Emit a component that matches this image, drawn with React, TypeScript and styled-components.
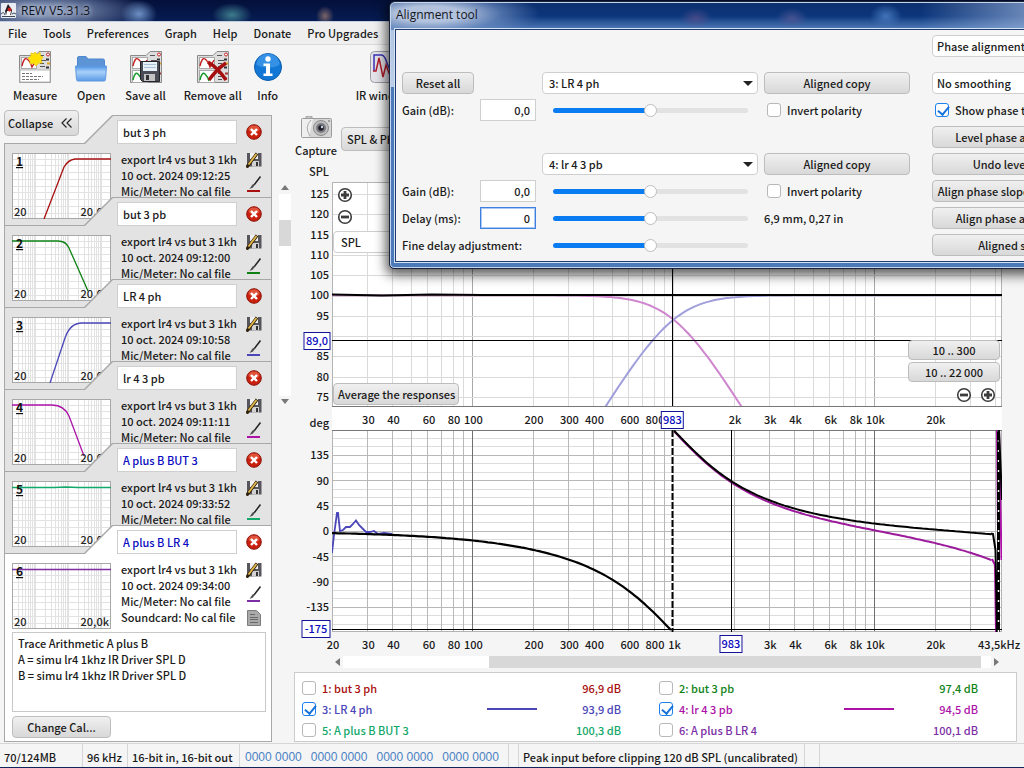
import React from "react";
import styled, { createGlobalStyle } from "styled-components";

const UI_FONT = '"Noto Sans CJK SC", "Open Sans", sans-serif';
const TITLE_FONT = '"Open Sans", "Noto Sans", sans-serif';

const GlobalStyle = createGlobalStyle`
  * { box-sizing: border-box; }
  body { margin: 0; background: #f5f5f5; }
  body, button, input, select, textarea {
    font-family: ${UI_FONT};
    font-size: 11px;
    line-height: 16px;
    font-weight: 500;
    color: #1a1a1a;
  }
`;

/* ---------- data ---------- */

type Measurement = {
  n: number;
  name: string;
  time: string;
  color: string;
  level: string;
  shown: boolean;
  computed?: boolean;
  thumb: string;
};

const measurements: Measurement[] = [
  { n: 1, name: "but 3 ph", time: "10 oct. 2024 09:12:25", color: "#a80f0f", level: "96,9 dB", shown: false, thumb: "M32 66L52 14Q56 7 63 6L99 6" },
  { n: 2, name: "but 3 pb", time: "10 oct. 2024 09:12:00", color: "#0f8216", level: "97,4 dB", shown: false, thumb: "M0 6L46 6Q54 6 57 13L76 56" },
  { n: 3, name: "LR 4 ph", time: "10 oct. 2024 09:10:58", color: "#4a46b8", level: "93,9 dB", shown: true, thumb: "M38 66L53 21Q58 6 70 6L99 6" },
  { n: 4, name: "lr 4 3 pb", time: "10 oct. 2024 09:11:11", color: "#ad12a8", level: "94,5 dB", shown: true, thumb: "M0 6L40 6Q52 6 57 17L72 57" },
  { n: 5, name: "A plus B BUT 3", time: "10 oct. 2024 09:33:52", color: "#12a86a", level: "100,3 dB", shown: false, computed: true, thumb: "M0 6.500L42 6.500L54 6L66 6.500L99 6.500" },
  { n: 6, name: "A plus B LR 4", time: "10 oct. 2024 09:34:00", color: "#7c2fa5", level: "100,1 dB", shown: false, computed: true, thumb: "M0 6.500L99 6.500" },
];

/* ---------- chart maths ---------- */

const W = 670;
const F_MIN = 20;
const DECADE = 201;
const fx = (f: number) => DECADE * Math.log10(f / F_MIN);
const pct = (f: number) => `${((fx(f) + 1) / W) * 100}%`;
const spl = (db: number) => 114 - (db - 100) * 4.06;
const deg = (d: number) => 101.3 - d * 0.5633;

const gridFreqs: number[] = [];
[10, 100, 1000, 10000].forEach((d) => {
  for (let k = 1; k < 10; k++) {
    const f = d * k;
    if (f > 20 && f < 43500) gridFreqs.push(f);
  }
});

const trace = (fn: (f: number) => number, from: number, to: number) => {
  const out: string[] = [];
  for (let x = fx(from); x <= fx(to); x += 3) {
    const f = F_MIN * Math.pow(10, x / DECADE);
    out.push(`${x.toFixed(1)} ${fn(f).toFixed(1)}`);
  }
  return "M" + out.join("L");
};

const highPass = (f: number) => {
  const r = Math.pow(f / 1000, 4);
  return spl(100.2 + 20 * Math.log10(r / (1 + r)));
};
const lowPass = (f: number) => {
  const r = Math.pow(f / 1000, 4);
  return spl(100.2 - 20 * Math.log10(1 + r));
};
const phase = (f: number, slope: number) => {
  const r = f / 1000;
  let p = (-2 * Math.atan2(Math.SQRT2 * r, 1 - r * r) * 180) / Math.PI;
  if (f > 995) p += 360;
  return deg(p - slope * r);
};

/* ---------- shared controls ---------- */

const Button = styled.button<{ $h?: number }>`
  height: ${(p) => p.$h ?? 22}px;
  padding: 0 4px;
  border: 1px solid #bdbdbd;
  border-radius: 4px;
  background: linear-gradient(#f0f0f0, #d8d8d8);
  white-space: nowrap;
  overflow: hidden;
  line-height: 18px;
`;

const TextBox = styled.input<{ $focus?: boolean; $blue?: boolean; $right?: boolean }>`
  display: block;
  width: 100%;
  height: ${(p) => (p.$right ? 22 : 24)}px;
  border: 1px solid ${(p) => (p.$focus ? "#3f7fe0" : "#cfcfcf")};
  box-shadow: ${(p) => (p.$focus ? "inset 0 0 0 1px #a9c8f4" : "none")};
  padding: 0 5px;
  background: #fff;
  color: ${(p) => (p.$blue ? "#0a0ac0" : "#1a1a1a")};
  text-align: ${(p) => (p.$right ? "right" : "left")};
  outline: none;
`;

const CheckLabel = styled.label<{ $color?: string }>`
  display: flex;
  align-items: center;
  gap: 6px;
  white-space: nowrap;
  color: ${(p) => p.$color ?? "#1a1a1a"};
`;

const CheckBox = styled.input.attrs({ type: "checkbox" })`
  appearance: none;
  flex: none;
  position: relative;
  width: 14px;
  height: 14px;
  margin: 0;
  border: 1px solid #b8b8b8;
  border-radius: 3px;
  background: #fff;
  &:checked {
    border-color: #1e80ea;
  }
  &:checked::after {
    content: "";
    position: absolute;
    left: 4px;
    top: 0;
    width: 5px;
    height: 9px;
    border: solid #1672dc;
    border-width: 0 2px 2px 0;
    transform: rotate(40deg);
  }
`;

const SelectWrap = styled.div<{ $arrow?: boolean }>`
  position: relative;
  height: 22px;
  &::after {
    content: "";
    display: ${(p) => (p.$arrow ? "block" : "none")};
    position: absolute;
    right: 5px;
    top: 9px;
    border: 5px solid transparent;
    border-top-color: #222;
    border-bottom: 0;
    pointer-events: none;
  }
`;

const SelectBox = styled.select<{ $inset?: number }>`
  appearance: none;
  display: block;
  width: 100%;
  height: 22px;
  padding: 0 ${(p) => p.$inset ?? 6}px;
  border: 1px solid #cfcfcf;
  border-radius: 4px;
  background: #fff;
  line-height: 18px;
`;

const Slider = styled.input.attrs({ type: "range" })`
  appearance: none;
  width: 195px;
  height: 14px;
  margin: 0 11px;
  background: transparent;
  &::-webkit-slider-runnable-track {
    height: 5px;
    border-radius: 3px;
    background: linear-gradient(90deg, #0a7cf2 50%, #e2e2e2 50%);
  }
  &::-webkit-slider-thumb {
    appearance: none;
    width: 13px;
    height: 13px;
    margin-top: -4px;
    border-radius: 50%;
    border: 1px solid #bdbdbd;
    background: #fff;
  }
`;

/* ---------- window frame ---------- */

const Window = styled.div`
  position: relative;
  display: flex;
  flex-direction: column;
  min-height: 100vh;
  overflow: hidden;
  background: #f5f5f5;
`;

const TitleBar = styled.header`
  display: flex;
  align-items: center;
  gap: 5px;
  height: 22px;
  padding: 0 1px;
  font-family: ${TITLE_FONT};
  font-size: 12px;
  font-weight: 400;
  color: #10131c;
  border-bottom: 1px solid #c3cfe0;
  background:
    radial-gradient(ellipse 18px 14px at 139px 14px, #6c8fc4, transparent),
    radial-gradient(ellipse 20px 12px at 232px 15px, #3d7c8c, transparent),
    radial-gradient(ellipse 9px 10px at 325px 16px, #7a6468, transparent),
    radial-gradient(ellipse 110px 24px at 40px 11px, #8493b3 20%, #44557f 60%, transparent),
    linear-gradient(#04103a, #061c52);
  & h1 {
    margin: 0;
    font: inherit;
    text-shadow: 0 0 4px #b9c4da, 0 0 6px #b9c4da;
  }
`;

const MenuBar = styled.nav`
  display: flex;
  gap: 16px;
  height: 23px;
  padding: 0 8px;
  align-items: center;
  background: #efefef;
  border-bottom: 1px solid #dadada;
`;

const MenuItem = styled.button`
  padding: 0;
  border: 0;
  background: none;
  white-space: nowrap;
`;

const Toolbar = styled.div`
  display: flex;
  gap: 18px;
  height: 63px;
  padding: 6px 13px 0;
`;

const ToolButton = styled.button<{ $push?: boolean }>`
  display: flex;
  flex: none;
  flex-direction: column;
  align-items: center;
  gap: 4px;
  padding: 0;
  border: 0;
  background: none;
  white-space: nowrap;
  margin-left: ${(p) => (p.$push ? 62 : 0)}px;
`;

const InfoButton = styled(ToolButton)`
  margin: 0 -6px;
`;

const Body = styled.div`
  display: flex;
  flex: 1;
`;

/* ---------- measurement list ---------- */

const Sidebar = styled.aside`
  display: flex;
  flex: none;
  width: 292px;
  padding: 2px 0 1px 4px;
`;

const ListColumn = styled.div`
  display: flex;
  flex-direction: column;
  width: 268px;
`;

const CollapseButton = styled(Button)`
  position: relative;
  z-index: 1;
  align-self: flex-start;
  display: flex;
  align-items: center;
  gap: 8px;
  width: 75px;
  padding: 0 3px;
`;

const CardList = styled.div`
  display: flex;
  flex-direction: column;
  flex: 1;
  margin-top: -21px;
`;

const TAB = "polygon(0 28px, 80px 28px, 108px 0, 100% 0, 100% 100%, 0 100%)";

const Card = styled.section<{ $active?: boolean }>`
  position: relative;
  isolation: isolate;
  display: grid;
  grid-template-columns: 99px 120px 22px;
  grid-template-rows: 24px auto;
  column-gap: 6px;
  row-gap: 8px;
  align-content: start;
  flex: ${(p) => (p.$active ? "1" : "none")};
  height: ${(p) => (p.$active ? "auto" : "111px")};
  padding: 5px 4px 3px 8px;
  overflow: hidden;
  & + & {
    margin-top: -29px;
  }
  &::before,
  &::after {
    content: "";
    position: absolute;
    z-index: -2;
    inset: 0;
    clip-path: ${TAB};
    background: #a8a8a8;
  }
  &::after {
    z-index: -1;
    inset: 1px;
    background: ${(p) => (p.$active ? "#ffffff" : "#e3e3e3")};
  }
`;

const NameCell = styled.div`
  grid-column: 2;
`;

const IconCell = styled.div<{ $top?: number }>`
  display: flex;
  flex-direction: column;
  align-items: center;
  justify-content: ${(p) => (p.$top ? "flex-start" : "center")};
  gap: 8px;
`;

const IconButton = styled.button`
  display: block;
  height: 16px;
  padding: 0;
  border: 0;
  background: none;
  & svg { display: block; }
`;

const Details = styled.div`
  margin-top: -1px;
  padding-left: 4px;
  overflow: hidden;
  white-space: nowrap;
`;

const ThumbSvg = styled.svg`
  display: block;
  margin-top: 1px;
`;

const Notes = styled.textarea`
  grid-column: 1 / -1;
  height: 80px;
  margin: -5px -1px 0 0;
  padding: 2px 5px;
  border: 1px solid #c8c8c8;
  background: #fff;
  resize: none;
  outline: none;
  display: block;
`;

const CalButton = styled(Button)`
  width: 99px;
  margin-top: -4px;
`;

const SideScroll = styled.div`
  display: flex;
  flex-direction: column;
  align-items: center;
  gap: 3px;
  width: 12px;
  height: 220px;
  margin: 75px 0 0 7px;
`;

const SideTrack = styled.div`
  width: 12px;
  flex: 1;
  padding-top: 26px;
  background: #fff;
`;

const SideThumb = styled.div`
  height: 26px;
  background: #d8d8d8;
`;

/* ---------- graph side ---------- */

const Main = styled.main`
  display: flex;
  flex-direction: column;
  flex: 1;
  min-width: 0;
`;

const GraphTools = styled.div`
  display: flex;
  align-items: flex-start;
  gap: 4px;
  height: 52px;
  padding: 8px 0 0 3px;
`;

const CaptureButton = styled(ToolButton)`
  width: 42px;
  gap: 4px;
`;

const ViewButton = styled(Button)`
  margin-top: 11px;
  width: 88px;
  padding: 0 5px;
  text-align: left;
`;

const GraphGrid = styled.div`
  display: grid;
  grid-template-columns: 40px 1fr 22px;
  grid-template-rows: 22px 225px 23px 202px 24px 12px;
`;

const AxisTitle = styled.div`
  align-self: end;
  padding-right: 3px;
  text-align: right;
`;

const GraphTitle = styled(AxisTitle)`
  align-self: center;
`;

const AxisSvg = styled.svg`
  display: block;
  width: 100%;
  height: 100%;
  overflow: visible;
  fill: #1a1a1a;
`;

const Strip = styled.div<{ $white?: boolean }>`
  grid-column: 2;
  background: ${(p) => (p.$white ? "#fff" : "transparent")};
`;

const PlotCell = styled.div`
  position: relative;
  grid-column: 2;
  background: #fff;
`;

const PlotSvg = styled.svg`
  display: block;
  width: 100%;
  height: 100%;
  & path, & line { vector-effect: non-scaling-stroke; }
`;

const TopLeftTools = styled.div`
  position: absolute;
  left: 1px;
  top: 5px;
  display: flex;
  flex-direction: column;
  gap: 6px;
  width: 90px;
  & > button { margin-left: 4px; align-self: flex-start; }
`;

const BottomLeftTools = styled.div`
  position: absolute;
  left: 1px;
  bottom: 2px;
  & > button { width: 126px; }
`;

const BottomRightTools = styled.div`
  position: absolute;
  right: 2px;
  bottom: 4px;
  width: 92px;
  display: flex;
  flex-direction: column;
  gap: 2px;
`;

const ZoomPair = styled.div`
  display: flex;
  justify-content: flex-end;
  gap: 8px;
  padding: 3px 4px 0 0;
`;

const HScroll = styled.div`
  grid-column: 2;
  display: flex;
  align-items: center;
  gap: 3px;
  padding: 0 2px;
`;

const HTrack = styled.div`
  display: flex;
  flex: 1;
  height: 12px;
  background: #fff;
`;

const HThumb = styled.div`
  width: 76%;
  margin-left: 22.5%;
  background: #d8d8d8;
`;

const Legend = styled.section`
  display: grid;
  grid-template-columns: 1fr 1fr;
  column-gap: 38px;
  grid-auto-rows: 21px;
  margin: 4px 7px 0 2px;
  height: 70px;
  padding: 4px 38px 0 7px;
  border: 1px solid #cccccc;
  background: #fff;
`;

const LegendRow = styled.div<{ $color: string }>`
  display: grid;
  grid-template-columns: 185px 50px 1fr;
  align-items: center;
  color: ${(p) => p.$color};
`;

const Swatch = styled.span<{ $color: string; $shown: boolean }>`
  height: 2px;
  background: ${(p) => (p.$shown ? p.$color : "transparent")};
`;

const Level = styled.span`
  text-align: right;
  white-space: nowrap;
`;

/* ---------- status bar ---------- */

const StatusBar = styled.footer`
  display: flex;
  height: 25px;
  border-top: 1px solid #d6d6d6;
  border-bottom: 1px solid #10265a;
`;

const StatusCell = styled.span<{ $w: number }>`
  display: flex;
  align-items: center;
  flex: none;
  width: ${(p) => p.$w}px;
  padding: 3px 0 0 4px;
  border-right: 1px solid #d6d6d6;
  white-space: nowrap;
`;

const BitsCell = styled(StatusCell)`
  gap: 9px;
  padding-left: 5px;
  font-family: "Liberation Sans", sans-serif;
  font-size: 12px;
  font-weight: 400;
  color: #4b82c4;
`;

/* ---------- alignment dialog ---------- */

const Dialog = styled.section`
  position: absolute;
  left: 389px;
  top: 1px;
  width: 725px;
  border: 1px solid #1a2338;
  border-radius: 6px 6px 5px 5px;
  padding: 0 6px 6px 5px;
  background:
    linear-gradient(rgba(190, 205, 230, 0.9), rgba(200, 214, 236, 0.9)) left 28px / 6px 57px no-repeat,
    radial-gradient(ellipse 110px 26px at 40px 12px, #b3c3dd 30%, rgba(120, 150, 200, 0.6) 65%, transparent) left top / 300px 28px no-repeat,
    radial-gradient(ellipse 16px 10px at 306px 16px, rgba(90, 80, 140, 0.7), transparent) left top / 100% 28px no-repeat,
    radial-gradient(ellipse 16px 10px at 402px 16px, rgba(90, 90, 150, 0.7), transparent) left top / 100% 28px no-repeat,
    radial-gradient(ellipse 16px 12px at 496px 14px, rgba(80, 130, 200, 0.8), transparent) left top / 100% 28px no-repeat,
    linear-gradient(90deg, transparent 530px, rgba(150, 175, 215, 0.7) 640px) left top / 100% 28px no-repeat,
    linear-gradient(#0d2f6e, #0b367c 50%, #5580bc) left top / 100% 28px no-repeat,
    #4c79b8;
  box-shadow: inset 0 0 0 1px #c4d6ee, 0 3px 12px 3px rgba(0, 0, 0, 0.65);
`;

const DialogTitle = styled.h2`
  margin: 0;
  height: 27px;
  padding: 0 1px;
  font-family: ${TITLE_FONT};
  font-size: 12px;
  font-weight: 400;
  line-height: 26px;
  color: #14161e;
`;

const DialogBody = styled.div`
  display: grid;
  grid-template-columns: 72px 56px 216px 146px 10px 157px;
  grid-template-rows: 32px repeat(7, 22px);
  gap: 5px 6px;
  align-items: center;
  padding: 5px 6px 5px;
  border: 1px solid #1d3b70;
  outline: 1px solid #d5e3f5;
  background: #f5f5f5;
  white-space: nowrap;
`;

const Cell = styled.div<{ $c: string; $r: number; $top?: boolean }>`
  grid-column: ${(p) => p.$c};
  grid-row: ${(p) => p.$r};
  align-self: ${(p) => (p.$top ? "start" : "center")};
  display: grid;
  min-width: 0;
`;

const Pad = styled.div`
  padding-left: 3px;
`;

/* ---------- drawings ---------- */

const CardIcon = ({ children }: { children?: React.ReactNode }) => (
  <svg width="32" height="32" viewBox="0 0 32 32">
    <path d="M.5 4.500H16L20 .5H31.500V31.500H.5Z" fill="#ddd" stroke="#8a8a8a" />
    <rect x="2.500" y="6.500" width="15" height="11" fill="#fff" stroke="#aaa" />
    <path d="M3 15Q5 6 8 8T13 16L17 9" fill="none" stroke="#c41c1c" strokeWidth="1.400" />
    <path d="M20 4.500H25M21 9.500H27M21 12.500H25M21 15.500H26" stroke="#555" />
    <circle cx="29" cy="3.500" r="1.500" fill="#fff" stroke="#c22" />
    <path d="M27 8.500H30M27 16.500H30" stroke="#333" strokeWidth="2" />
    <path d="M28 12.500H31" stroke="#e0a01c" strokeWidth="2" />
    {children}
  </svg>
);

const MeasureIcon = () => (
  <CardIcon>
    <rect x="1" y="19" width="30" height="12" fill="#fff" stroke="#bbb" />
    <path d="M3 22.500H13M3 25.500H24M3 28.500H20" stroke="#777" strokeDasharray="3 1" />
    <path d="M16 1L18 3.500L21 1.500L21.500 5L24 6L22 9L23 12L19.500 12L17 15L14.500 12.500L11 13L11 9.500L9 7L12 5L12 2L15 3Z" fill="#ffe21a" stroke="#e9c400" strokeWidth=".8" />
    <circle cx="16.500" cy="7.500" r="4.500" fill="#ffe000" />
  </CardIcon>
);

const LowerTrace = () => (
  <>
    <rect x="2.500" y="19.500" width="15" height="12" fill="#fff" stroke="#aaa" />
    <path d="M3 29Q5 20 8 23T12 30" fill="none" stroke="#159a2b" strokeWidth="1.500" />
    <path d="M21 22.500H26M21 25.500H27M21 28.500H25" stroke="#555" />
    <path d="M28 22.500H31M28 27.500H30" stroke="#a33" strokeWidth="2" />
  </>
);

const SaveAllIcon = () => (
  <CardIcon>
    <LowerTrace />
    <path d="M10.500 10.500H29.500V30.500H12.500L10.500 28.500Z" fill="#4a4d55" stroke="#22242a" />
    <rect x="13" y="11" width="14" height="9" fill="#e8f0f8" />
    <path d="M14 13.500H26M14 16.500H26" stroke="#a9bfd4" />
    <rect x="14" y="23" width="11" height="7" fill="#c3c3c3" />
    <rect x="16" y="24" width="3" height="5" fill="#333" />
  </CardIcon>
);

const RemoveAllIcon = () => (
  <CardIcon>
    <LowerTrace />
    <path d="M11 11Q21 17 29 29M29 12Q20 18 12 29" fill="none" stroke="#a50f0f" strokeWidth="3.500" />
  </CardIcon>
);

const OpenIcon = () => (
  <svg width="32" height="32" viewBox="0 0 32 32">
    <defs>
      <linearGradient id="folder" x1="0" y1="0" x2="0" y2="1">
        <stop offset="0" stopColor="#4d93e2" />
        <stop offset="0.400" stopColor="#a9d0fa" />
        <stop offset="1" stopColor="#5a9ae6" />
      </linearGradient>
    </defs>
    <path d="M2.500 16V7Q2.500 5.500 4 5.500H11L13 8H28Q29.500 8 29.500 9.500V16Z" fill="#5c94d6" stroke="#4c86cc" />
    <path d="M.5 15H31.500L30.500 28.500Q30.400 30 29 30H3Q1.600 30 1.500 28.500Z" fill="url(#folder)" stroke="#5f98e0" />
  </svg>
);

const InfoIcon = () => (
  <svg width="28" height="32" viewBox="0 0 28 32">
    <circle cx="14" cy="16" r="13.500" fill="#1377d6" stroke="#0b5cae" />
    <path d="M2.500 14A11.500 11.500 0 0 1 25.500 14Q14 20 2.500 14Z" fill="#4da3f0" opacity=".6" />
    <circle cx="14" cy="8" r="2.700" fill="#fff" />
    <path d="M9.500 12.500H16V22.500H18.500V25H9.500V22.500H12V15H9.500Z" fill="#fff" />
  </svg>
);

const IrIcon = () => (
  <svg width="32" height="32" viewBox="0 0 32 32">
    <rect x=".5" y=".5" width="31" height="31" rx="4" fill="#e4e4ea" stroke="#9c9ca4" />
    <path d="M4 20V4H12Q15 5 17 12T28 28" fill="none" stroke="#3a32b8" strokeWidth="1.500" />
    <path d="M3 20H6L9 7L13 26L16 14L19 22L22 18H29" fill="none" stroke="#b31b2b" strokeWidth="1.500" />
  </svg>
);

const AppIcon = () => (
  <svg width="15" height="15" viewBox="0 0 15 15">
    <rect width="15" height="15" rx="1" fill="#e9ecf2" />
    <path d="M7 1L11 7L10 12H5L4 8Z" fill="#1b1b1f" />
    <path d="M6 8L10 8L9 13H5Z" fill="#fff" />
    <circle cx="8.500" cy="6.500" r="2" fill="#c62020" />
    <path d="M0 11Q3 8 4 12M11 11Q13 9 15 11M1 13.500H14" stroke="#3e4856" fill="none" />
  </svg>
);

const CameraIcon = () => (
  <svg width="31" height="22" viewBox="0 0 31 22">
    <rect x="5" y="0" width="6" height="3" rx="1" fill="#c8c8c8" stroke="#999" />
    <rect x=".5" y="2.500" width="30" height="19" rx="1" fill="#d6d6d6" stroke="#9d9d9d" />
    <path d="M1 3H12L8 21H1Z" fill="#efefef" />
    <path d="M10 4Q3 11 9 20" fill="none" stroke="#aaa" />
    <circle cx="20" cy="12" r="7.500" fill="#bcbcbc" stroke="#8c8c8c" />
    <circle cx="20" cy="12" r="5" fill="#7a7a82" />
    <circle cx="20" cy="12" r="2.800" fill="#1e1e26" />
    <circle cx="21" cy="11" r="1.200" fill="#cfd6e8" />
    <circle cx="28" cy="5" r="1" fill="#888" />
  </svg>
);

const CloseIcon = () => (
  <svg width="16" height="16" viewBox="0 0 16 16">
    <circle cx="8" cy="8" r="7.300" fill="#c9200f" stroke="#8d1408" />
    <ellipse cx="8" cy="5" rx="5.500" ry="3.500" fill="#e8694f" opacity=".7" />
    <path d="M5 5L11 11M11 5L5 11" stroke="#fff" strokeWidth="2.400" />
  </svg>
);

const SaveEditIcon = () => (
  <svg width="16" height="16" viewBox="0 0 16 16">
    <path d="M1 1H15.500V14.500H3L1 12.500Z" fill="#56565c" />
    <rect x="4" y="1" width="8" height="6" fill="#f1f1f1" />
    <rect x="6" y="9" width="7" height="5.500" fill="#d2d2d2" />
    <rect x="10" y="10" width="2" height="4" fill="#333" />
    <path d="M.5 15.500L11 1.500" stroke="#30220c" strokeWidth="3.200" />
    <path d="M2.500 12.500L10.500 2" stroke="#e4b94c" strokeWidth="1.800" />
  </svg>
);

const BrushIcon = ({ color }: { color: string }) => (
  <svg width="16" height="16" viewBox="0 0 16 16">
    <path d="M14.500 .5L8 9" stroke="#222" strokeWidth="1.500" />
    <path d="M9.500 7.500L7 11.500L3.500 13L6.500 8.500Z" fill="#4a4a4a" />
    <rect x="1" y="14" width="13" height="2" fill={color} />
  </svg>
);

const DocIcon = () => (
  <svg width="16" height="16" viewBox="0 0 16 16">
    <path d="M1.500 .5H10.500L14.500 4.500V15.500H1.500Z" fill="#a9a9a9" stroke="#7c7c7c" />
    <path d="M4 4.500H9M4 7.500H12M4 9.500H12M4 12.500H12" stroke="#6a6a6a" />
  </svg>
);

const ZoomIcon = ({ plus }: { plus?: boolean }) => (
  <svg width="16" height="16" viewBox="0 0 16 16">
    <circle cx="8" cy="8" r="6.300" fill="#fff" stroke="#3c3c3c" strokeWidth="1.600" />
    <path d={plus ? "M4 8H12M8 4V12" : "M4 8H12"} stroke="#3c3c3c" strokeWidth="2.800" />
  </svg>
);

const Arrow = ({ d, w = 8, h = 6 }: { d: string; w?: number; h?: number }) => (
  <svg width={w} height={h}>
    <path d={d} fill="#777" />
  </svg>
);

const Thumb = ({ m }: { m: Measurement }) => {
  const lines: number[] = [];
  [10, 100, 1000, 10000].forEach((d) => {
    for (let k = 1; k < 10; k++) {
      const x = 33 * Math.log10((d * k) / 20);
      if (x > 1 && x < 98) lines.push(Math.round(x));
    }
  });
  return (
    <ThumbSvg width="99" height="66" viewBox="0 0 99 66">
      <rect x=".5" y=".5" width="98" height="65" fill="#fff" stroke="#a8a8a8" />
      <g stroke="#e2e2e2" shapeRendering="crispEdges">
        {lines.map((x, i) => <path key={i} d={`M${x + 0.5} 1V65`} />)}
        {[6, 12, 19, 26, 33, 39, 46, 53, 60].map((y) => <path key={y} d={`M1 ${y + 0.5}H98`} />)}
      </g>
      <path d={m.thumb} fill="none" stroke={m.color} strokeWidth="1.300" />
      <text x="4" y="13" fontSize="12" fontWeight="700" textDecoration="underline" fill="#111">{m.n}</text>
      <text x="2" y="63" fill="#262626">20</text>
      <text x="97" y="63" textAnchor="end" fill="#262626">20,0k</text>
    </ThumbSvg>
  );
};

/* ---------- composed parts ---------- */

const MeasurementCard = ({ m, active }: { m: Measurement; active: boolean }) => (
  <Card $active={active}>
    <NameCell>
      <TextBox aria-label={`Name of measurement ${m.n}`} defaultValue={m.name} $blue={m.computed} />
    </NameCell>
    <IconCell>
      <IconButton aria-label="Remove measurement"><CloseIcon /></IconButton>
    </IconCell>
    <Thumb m={m} />
    <Details>
      <div>export lr4 vs but 3 1khz</div>
      <div>{m.time}</div>
      <div>Mic/Meter: No cal file</div>
      {active && <div>Soundcard: No cal file</div>}
    </Details>
    <IconCell $top={1}>
      <IconButton aria-label="Save measurement"><SaveEditIcon /></IconButton>
      <IconButton aria-label="Change trace colour"><BrushIcon color={m.color} /></IconButton>
      {active && <IconButton aria-label="Measurement notes"><DocIcon /></IconButton>}
    </IconCell>
    {active && (
      <>
        <Notes
          aria-label="Notes"
          defaultValue={"Trace Arithmetic A plus B\nA = simu lr4 1khz IR Driver SPL D\nB = simu lr4 1khz IR Driver SPL D"}
        />
        <CalButton>Change Cal...</CalButton>
      </>
    )}
  </Card>
);

const FREQ_LABELS: [number, string][] = [
  [30, "30"], [40, "40"], [60, "60"], [80, "80"], [100, "100"], [200, "200"], [300, "300"],
  [400, "400"], [600, "600"], [800, "800"], [2000, "2k"], [3000, "3k"], [4000, "4k"],
  [6000, "6k"], [8000, "8k"], [10000, "10k"], [20000, "20k"],
];

const CursorTag = ({ x, y, w, text }: { x: number | string; y: number; w: number; text: string }) => (
  <svg x={x} y={y} overflow="visible">
    <rect x={-w / 2 + 0.5} y="-8.500" width={w - 1} height="17" fill="#fff" stroke="#12129a" />
    <text x="0" y="4" textAnchor="middle" fill="#0a0ac0">{text}</text>
  </svg>
);

const SplPlot = () => (
  <PlotSvg viewBox={`0 0 ${W} 225`} preserveAspectRatio="none">
    <g shapeRendering="crispEdges" strokeWidth="1">
      {gridFreqs.map((f) => (
        <line key={f} x1={fx(f)} x2={fx(f)} y1="0" y2="225" stroke={f === 100 || f === 10000 ? "#a8a8a8" : "#dadada"} />
      ))}
      {[75, 80, 85, 90, 95, 100, 105, 110, 115, 120, 125].map((v) => (
        <line key={v} x1="0" x2={W} y1={spl(v)} y2={spl(v)} stroke="#dadada" />
      ))}
      <path d={`M0.500 225V0.500H${W - 0.5}V225`} fill="none" stroke="#b4b4b4" />
    </g>
    <path d={trace(lowPass, 20, 2260)} fill="none" stroke="#cf86cf" strokeWidth="2" />
    <path d={trace(highPass, 450, 43500)} fill="none" stroke="#a09fdc" strokeWidth="2" />
    <path d="M0 112.500L50 113.500L100 112.500L150 113L342 113H670" fill="none" stroke="#000" strokeWidth="2" />
    <path d="M0 158.500H670M340.500 0V225" stroke="#000" strokeWidth="1.300" shapeRendering="crispEdges" />
    <path d="M0 224.500H670" stroke="#777" shapeRendering="crispEdges" />
  </PlotSvg>
);

const minorDegrees: number[] = [];
for (let d = -165; d < 180; d += 15) minorDegrees.push(d);

const PhasePlot = () => (
  <PlotSvg viewBox={`0 0 ${W} 202`} preserveAspectRatio="none">
    <g shapeRendering="crispEdges" strokeWidth="1">
      {minorDegrees.map((d) => (
        <line key={d} x1="0" x2={W} y1={deg(d)} y2={deg(d)} stroke={d % 45 === 0 ? "#b8b8b8" : "#dcdcdc"} />
      ))}
      {gridFreqs.map((f) => (
        <line key={f} x1={fx(f)} x2={fx(f)} y1="0" y2="202" stroke={f === 100 || f === 10000 ? "#6f6f6f" : "#b8b8b8"} />
      ))}
      <path d={`M0.500 0V201.500H${W - 0.5}V0`} fill="none" stroke="#b4b4b4" />
      <path d={`M0 .5H${W}`} stroke="#777" />
    </g>
    <path
      d="M0 123L2 105L5 83L6 83L8 101L11 100L14 97L18 97L21 94L24 90.500L27 95L31 99L34 102L38 102L42 101L46 104L52 103L60 104"
      fill="none" stroke="#4a46b8" strokeWidth="1.800"
    />
    <path d={trace((f) => phase(f, 1.45), 1000, 38700)} fill="none" stroke="#9c1a9c" strokeWidth="2" />
    <path d="M660 129L663 135L664 202M665 0L667 202M667 0L669.500 130" fill="none" stroke="#ad12a8" strokeWidth="2" />
    <path d={trace((f) => phase(f, 0), 20, 1000)} fill="none" stroke="#000" strokeWidth="2.200" />
    <path d={trace((f) => phase(f, 0.25), 1000, 38700)} fill="none" stroke="#000" strokeWidth="2" />
    <path d="M659 103.500L661 104L663.500 120L665 202" fill="none" stroke="#000" strokeWidth="2" />
    <path d="M666.500 0V202" stroke="#000" strokeWidth="3" />
    <path d="M666.500 0V202" stroke="#fff" strokeWidth="1.500" strokeDasharray="2 8" />
    <path d="M667 0L670 70" stroke="#000" strokeWidth="2" />
    <path d="M340.500 0V202" stroke="#fff" strokeWidth="2" />
    <path d="M340.500 0V202" stroke="#000" strokeWidth="2" strokeDasharray="7 2" />
    <path d="M0 199.500H670M399.500 0V202" stroke="#000" strokeWidth="1.300" shapeRendering="crispEdges" />
  </PlotSvg>
);

const Graphs = () => (
  <GraphGrid>
    <GraphTitle>SPL</GraphTitle>
    <span />
    <span />

    <AxisSvg>
      {[125, 120, 115, 110, 105, 100, 95, 85, 80, 75].map((v) => (
        <text key={v} x="37" y={Math.round(spl(v) + 3.4)} textAnchor="end">{v}</text>
      ))}
      <CursorTag x={25} y={159} w={27} text="89,0" />
    </AxisSvg>
    <PlotCell>
      <SplPlot />
      <TopLeftTools>
        <IconButton aria-label="Zoom in vertically"><ZoomIcon plus /></IconButton>
        <IconButton aria-label="Zoom out vertically"><ZoomIcon /></IconButton>
        <SelectWrap>
          <SelectBox aria-label="Graph quantity" $inset={7}><option>SPL</option></SelectBox>
        </SelectWrap>
      </TopLeftTools>
      <BottomLeftTools><Button>Average the responses</Button></BottomLeftTools>
      <BottomRightTools>
        <Button $h={20}>10 .. 300</Button>
        <Button $h={20}>10 .. 22 000</Button>
        <ZoomPair>
          <IconButton aria-label="Zoom out horizontally"><ZoomIcon /></IconButton>
          <IconButton aria-label="Zoom in horizontally"><ZoomIcon plus /></IconButton>
        </ZoomPair>
      </BottomRightTools>
    </PlotCell>
    <span />

    <AxisTitle>deg</AxisTitle>
    <Strip $white>
      <AxisSvg>
        {FREQ_LABELS.map(([f, t]) => (
          <text key={f} x={pct(f)} y="17" textAnchor="middle">{t}</text>
        ))}
        <CursorTag x={pct(975)} y={13} w={23} text="983" />
      </AxisSvg>
    </Strip>
    <span />

    <AxisSvg>
      {[135, 90, 45, 0, -45, -90, -135].map((v) => (
        <text key={v} x="37" y={deg(v) + 4} textAnchor="end">{v}</text>
      ))}
      <CursorTag x={24} y={199} w={29} text="-175" />
    </AxisSvg>
    <PlotCell><PhasePlot /></PlotCell>
    <span />

    <Strip>
      <AxisSvg>
        <text x={pct(20)} y="17" textAnchor="middle">20</text>
        {FREQ_LABELS.filter(([f]) => f !== 2000).map(([f, t]) => (
          <text key={f} x={pct(f)} y="17" textAnchor="middle">{t}</text>
        ))}
        <text x={pct(1000)} y="17" textAnchor="middle">1k</text>
        <text x={pct(41200)} y="17" textAnchor="middle">43,5kHz</text>
        <CursorTag x={pct(1910)} y={12} w={23} text="983" />
      </AxisSvg>
    </Strip>
    <HScroll>
      <Arrow d="M6 0V8L1 4Z" w={6} h={8} />
      <HTrack><HThumb /></HTrack>
      <Arrow d="M0 0V8L5 4Z" w={6} h={8} />
    </HScroll>
  </GraphGrid>
);

const AlignmentDialog = () => (
  <Dialog aria-label="Alignment tool">
    <DialogTitle>Alignment tool</DialogTitle>
    <DialogBody>
      <Cell $c="6" $r={1} $top>
        <SelectWrap $arrow><SelectBox aria-label="Mode" $inset={4}><option>Phase alignment</option></SelectBox></SelectWrap>
      </Cell>

      <Cell $c="1" $r={2}><Button>Reset all</Button></Cell>
      <Cell $c="3" $r={2}>
        <SelectWrap $arrow><SelectBox aria-label="First measurement"><option>3: LR 4 ph</option></SelectBox></SelectWrap>
      </Cell>
      <Cell $c="4" $r={2}><Button>Aligned copy</Button></Cell>
      <Cell $c="6" $r={2}>
        <SelectWrap $arrow><SelectBox aria-label="Smoothing" $inset={4}><option>No smoothing</option></SelectBox></SelectWrap>
      </Cell>

      <Cell $c="1" $r={3}><label htmlFor="gain-a">Gain (dB):</label></Cell>
      <Cell $c="2" $r={3}><TextBox id="gain-a" $right defaultValue="0,0" /></Cell>
      <Cell $c="3" $r={3}><Slider aria-label="First gain" defaultValue={50} /></Cell>
      <Cell $c="4" $r={3}><Pad><CheckLabel><CheckBox />Invert polarity</CheckLabel></Pad></Cell>
      <Cell $c="6" $r={3}><Pad><CheckLabel><CheckBox defaultChecked />Show phase trace</CheckLabel></Pad></Cell>

      <Cell $c="6" $r={4}><Button>Level phase at cursor</Button></Cell>

      <Cell $c="3" $r={5}>
        <SelectWrap $arrow><SelectBox aria-label="Second measurement"><option>4: lr 4 3 pb</option></SelectBox></SelectWrap>
      </Cell>
      <Cell $c="4" $r={5}><Button>Aligned copy</Button></Cell>
      <Cell $c="6" $r={5}><Button>Undo levelling</Button></Cell>

      <Cell $c="1" $r={6}><label htmlFor="gain-b">Gain (dB):</label></Cell>
      <Cell $c="2" $r={6}><TextBox id="gain-b" $right defaultValue="0,0" /></Cell>
      <Cell $c="3" $r={6}><Slider aria-label="Second gain" defaultValue={50} /></Cell>
      <Cell $c="4" $r={6}><Pad><CheckLabel><CheckBox />Invert polarity</CheckLabel></Pad></Cell>
      <Cell $c="6" $r={6}><Button>Align phase slopes at cursor</Button></Cell>

      <Cell $c="1" $r={7}><label htmlFor="delay">Delay (ms):</label></Cell>
      <Cell $c="2" $r={7}><TextBox id="delay" $right $focus defaultValue="0" /></Cell>
      <Cell $c="3" $r={7}><Slider aria-label="Delay" defaultValue={50} /></Cell>
      <Cell $c="4" $r={7}>6,9 mm, 0,27 in</Cell>
      <Cell $c="6" $r={7}><Button>Align phase at cursor</Button></Cell>

      <Cell $c="1 / 3" $r={8}><label htmlFor="fine">Fine delay adjustment:</label></Cell>
      <Cell $c="3" $r={8}><Slider id="fine" defaultValue={50} /></Cell>
      <Cell $c="6" $r={8}><Button>Aligned sum</Button></Cell>
    </DialogBody>
  </Dialog>
);

export default function App() {
  return (
    <Window>
      <GlobalStyle />
      <TitleBar>
        <AppIcon />
        <h1>REW V5.31.3</h1>
      </TitleBar>
      <MenuBar>
        {["File", "Tools", "Preferences", "Graph", "Help", "Donate", "Pro Upgrades"].map((t) => (
          <MenuItem key={t}>{t}</MenuItem>
        ))}
      </MenuBar>
      <Toolbar>
        <ToolButton><MeasureIcon />Measure</ToolButton>
        <ToolButton><OpenIcon />Open</ToolButton>
        <ToolButton><SaveAllIcon />Save all</ToolButton>
        <ToolButton><RemoveAllIcon />Remove all</ToolButton>
        <InfoButton><InfoIcon />Info</InfoButton>
        <ToolButton $push><IrIcon />IR windows</ToolButton>
      </Toolbar>
      <Body>
        <Sidebar>
          <ListColumn>
            <CollapseButton $h={26}>
              Collapse
              <svg width="12" height="10" viewBox="0 0 12 10">
                <path d="M5.500 .5L1 5L5.500 9.500M10.500 .5L6 5L10.500 9.500" fill="none" stroke="#262626" strokeWidth="1.200" />
              </svg>
            </CollapseButton>
            <CardList>
              {measurements.map((m) => <MeasurementCard key={m.n} m={m} active={m.n === 6} />)}
            </CardList>
          </ListColumn>
          <SideScroll>
            <Arrow d="M0 5H8L4 0Z" />
            <SideTrack><SideThumb /></SideTrack>
            <Arrow d="M0 0H8L4 5Z" />
          </SideScroll>
        </Sidebar>
        <Main>
          <GraphTools>
            <CaptureButton><CameraIcon />Capture</CaptureButton>
            <ViewButton $h={24}>SPL &amp; Phase</ViewButton>
          </GraphTools>
          <Graphs />
          <Legend>
            {measurements.map((m) => (
              <LegendRow key={m.n} $color={m.color}>
                <CheckLabel $color={m.color}>
                  <CheckBox defaultChecked={m.shown} />
                  {m.n}: {m.name}
                </CheckLabel>
                <Swatch $color={m.color} $shown={m.shown} />
                <Level>{m.level}</Level>
              </LegendRow>
            ))}
          </Legend>
        </Main>
      </Body>
      <StatusBar>
        <StatusCell $w={83}>70/124MB</StatusCell>
        <StatusCell $w={45}>96 kHz</StatusCell>
        <StatusCell $w={112}>16-bit in, 16-bit out</StatusCell>
        <BitsCell $w={269}>
          {[0, 1, 2, 3].map((i) => <span key={i}>0000 0000</span>)}
        </BitsCell>
        <StatusCell $w={10} />
        <StatusCell $w={286}>Peak input before clipping 120 dB SPL (uncalibrated)</StatusCell>
        <StatusCell $w={15} />
      </StatusBar>
      <AlignmentDialog />
    </Window>
  );
}
